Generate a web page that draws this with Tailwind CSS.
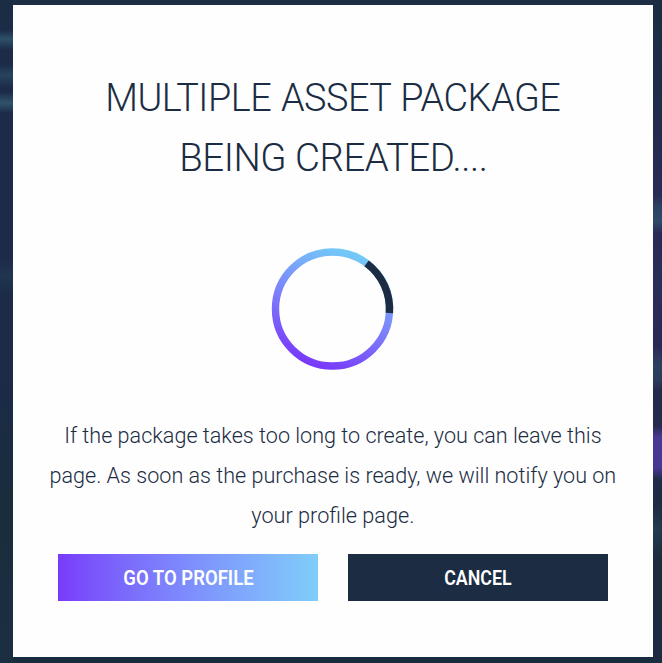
<!DOCTYPE html>
<html lang="en">
<head>
<meta charset="utf-8">
<title>Package creation</title>
<script src="https://cdn.jsdelivr.net/npm/@tailwindcss/browser@4"></script>
</head>
<body class="h-[663px] w-[662px] overflow-hidden bg-[#1b2c43] font-[Roboto,'Open_Sans',sans-serif] text-[#1b2c43]">
<div class="relative h-[663px] w-[662px] overflow-hidden bg-linear-to-b from-[#1c2d44] via-[#1c2b48] to-[#192c3e] px-[13px] pt-[5px]">
  <div class="absolute top-0 left-0 h-full w-[13px] bg-[linear-gradient(180deg,#1b2d44_0px,#1b2c47_30px,#2d5069_39px,#1b2b48_50px,#1b2b48_64px,#27435e_75px,#1c2b49_88px,#1c2b49_92px,#2f536b_103px,#1c2b49_113px,#1c2b4a_260px,#203550_275px,#1b2b48_295px,#1b2b48_380px,#1a2d3c_500px,#1b2f42_663px)]"></div>
  <div class="absolute top-0 right-0 h-full w-[9px] bg-[linear-gradient(180deg,#1a2d43_0px,#1d2c49_80px,#292a56_195px,#2c4261_207px,#304a69_221px,#292a55_234px,#292f58_280px,#2a2856_345px,#2d4060_365px,#2b3c5c_380px,#232b4d_390px,#242b4e_426px,#483893_437px,#463792_468px,#1d2c47_480px,#1d2c43_505px,#243b4d_530px,#1a2c3d_560px,#1b2c41_663px)]"></div>
  <main class="relative flex h-[652px] w-[640px] flex-col items-center bg-[#fefefe] pt-[63px]">
    <h1 class="flex flex-col items-center text-[39.5px] leading-[60px] font-[340] whitespace-nowrap">
      <span class="scale-x-[0.957] tracking-[-0.5px] [word-spacing:1px]">MULTIPLE ASSET PACKAGE</span>
      <span class="scale-x-[0.973] tracking-[-0.5px]">BEING CREATED....</span>
    </h1>
    <svg class="mt-[59px] size-[124px] shrink-0" viewBox="0 0 124 124" fill="none">
      <defs><linearGradient id="ring" gradientUnits="userSpaceOnUse" x1="82" y1="4" x2="39" y2="117"><stop stop-color="#72ccf8"/><stop offset=".5" stop-color="#7c86fa"/><stop offset="1" stop-color="#783af9"/></linearGradient></defs>
      <circle cx="61.5" cy="62" r="57" stroke="url(#ring)" stroke-width="7.4"/>
      <path d="M95.6 16.4A57 57 0 0 1 118.4 66" stroke="#1b2c43" stroke-width="7.4"/>
    </svg>
    <p class="mt-[45px] flex flex-col items-center text-[22px] leading-[40px] font-[330] whitespace-nowrap">
      <span class="scale-x-[0.981]">If the package takes too long to create, you can leave this</span>
      <span class="scale-x-[0.981]">page. As soon as the purchase is ready, we will notify you on</span>
      <span class="scale-x-[0.985]">your profile page.</span>
    </p>
    <div class="mt-[18px] flex gap-[30px] text-[20px] font-semibold text-white">
      <button class="h-[47px] w-[260px] bg-linear-to-r from-[#783afa] to-[#80cdfa]"><span class="inline-block scale-x-[0.925]">GO TO PROFILE</span></button>
      <button class="h-[47px] w-[260px] bg-[#1b2c43]"><span class="inline-block scale-x-[0.89]">CANCEL</span></button>
    </div>
  </main>
</div>
</body>
</html>
